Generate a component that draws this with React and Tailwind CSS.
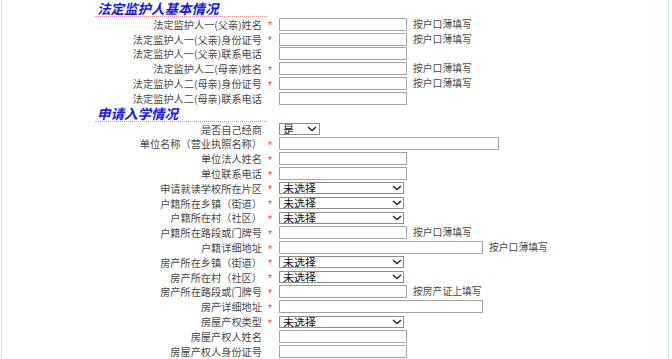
import React from "react";

const FONT = { fontFamily: '"Noto Sans CJK SC", "Noto Sans", sans-serif' };

const section1 = [
  { label: "法定监护人一(父亲)姓名", star: true, type: "input", hint: "按户口薄填写" },
  { label: "法定监护人一(父亲)身份证号", star: true, type: "input", hint: "按户口薄填写" },
  { label: "法定监护人一(父亲)联系电话", star: false, type: "input" },
  { label: "法定监护人二(母亲)姓名", star: true, type: "input", hint: "按户口薄填写" },
  { label: "法定监护人二(母亲)身份证号", star: true, type: "input", hint: "按户口薄填写" },
  { label: "法定监护人二(母亲)联系电话", star: false, type: "input" },
];

const section2 = [
  { label: "是否自己经商", star: false, type: "yesno" },
  { label: "单位名称（营业执照名称）", star: true, type: "wide" },
  { label: "单位法人姓名", star: true, type: "input" },
  { label: "单位联系电话", star: true, type: "input" },
  { label: "申请就读学校所在片区", star: true, type: "select" },
  { label: "户籍所在乡镇（街道）", star: true, type: "select" },
  { label: "户籍所在村（社区）", star: true, type: "select" },
  { label: "户籍所在路段或门牌号", star: true, type: "input", hint: "按户口薄填写" },
  { label: "户籍详细地址", star: true, type: "addr", hint: "按户口薄填写" },
  { label: "房产所在乡镇（街道）", star: true, type: "select" },
  { label: "房产所在村（社区）", star: true, type: "select" },
  { label: "房产所在路段或门牌号", star: true, type: "input", hint: "按房产证上填写" },
  { label: "房产详细地址", star: true, type: "addr" },
  { label: "房屋产权类型", star: true, type: "select" },
  { label: "房屋产权人姓名", star: false, type: "input" },
  { label: "房屋产权人身份证号", star: false, type: "input" },
];

function Chevron({ className }) {
  return (
    <svg className={className} width="10" height="6" viewBox="0 0 10 6" fill="none">
      <path d="M1 1 L5 4.6 L9 1" stroke="#222" strokeWidth="1.4" />
    </svg>
  );
}

function Control({ type }) {
  if (type === "yesno") {
    return (
      <div className="relative w-[41px] h-[12px]">
        <select
          className="block appearance-none w-full h-[12px] p-0 border border-[#8c8c8c] bg-white pl-[3px] text-[11px] leading-[10px] text-[#111] outline-none"
          style={FONT}
          defaultValue="是"
        >
          <option>是</option>
          <option>否</option>
        </select>
        <Chevron className="absolute right-[3px] top-[3px] pointer-events-none" />
      </div>
    );
  }
  if (type === "select") {
    return (
      <div className="relative w-[125px] h-[12px]">
        <select
          className="block appearance-none w-full h-[12px] p-0 border border-[#8c8c8c] bg-white pl-[3px] text-[11px] leading-[10px] text-[#111] outline-none"
          style={FONT}
          defaultValue="未选择"
        >
          <option>未选择</option>
        </select>
        <Chevron className="absolute right-[2px] top-[3px] pointer-events-none" />
      </div>
    );
  }
  if (type === "wide") {
    return <input className="block w-[220px] h-[13px] border border-[#a3a3a3] bg-white outline-none" />;
  }
  if (type === "addr") {
    return <input className="block w-[204px] h-[13px] border border-[#a3a3a3] bg-white outline-none" />;
  }
  return <input className="block w-[128px] h-[13px] border border-[#a3a3a3] bg-white outline-none" />;
}

function Row({ row }) {
  return (
    <div className="flex items-center h-[14.8px]">
      <div className="w-[170px] shrink-0 pr-[3px] text-right text-[10.2px] leading-[11px] text-[#474747] whitespace-nowrap">
        {row.label}
      </div>
      <div
        className="w-[14px] shrink-0 pl-[3px] text-[10px] leading-[10px] h-[10px] text-[#e23a3a] pt-[2px]"
        style={{ fontFamily: '"Liberation Sans", sans-serif' }}
      >
        {row.star ? "*" : ""}
      </div>
      <div className="flex items-center">
        <Control type={row.type} />
        {row.hint ? (
          <span className="ml-[6px] text-[9.8px] leading-[11px] text-[#474747] whitespace-nowrap">
            {row.hint}
          </span>
        ) : null}
      </div>
    </div>
  );
}

function Header({ title, tall }) {
  return (
    <div
      className={
        tall
          ? "w-[172px] h-[17px] border-b border-dotted border-[#ee8f8f] pl-[2px] text-[13.5px] leading-[16px] font-bold italic text-[#1717e8] whitespace-nowrap"
          : "w-[172px] h-[16px] border-b border-dotted border-[#ee8f8f] pl-[2px] text-[13.5px] leading-[14px] font-bold italic text-[#1717e8] whitespace-nowrap"
      }
    >
      {title}
    </div>
  );
}

export default function App() {
  return (
    <div className="w-[672px] h-[359px] bg-white overflow-hidden" style={FONT}>
      <div className="ml-[1px] w-[668px] h-[359px] border-x border-[#c6dfee] pl-[93px]">
        <Header title="法定监护人基本情况" tall />
        {section1.map((r, i) => (
          <Row key={"a" + i} row={r} />
        ))}
        <Header title="申请入学情况" />
        {section2.map((r, i) => (
          <Row key={"b" + i} row={r} />
        ))}
      </div>
    </div>
  );
}
